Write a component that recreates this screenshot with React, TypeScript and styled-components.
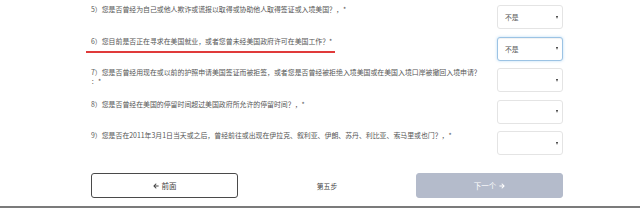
import React from 'react';
import styled, { createGlobalStyle } from 'styled-components';
import { FaArrowLeft, FaArrowRight } from 'react-icons/fa';

const GlobalStyle = createGlobalStyle`
  html, body {
    margin: 0;
    padding: 0;
    background: #ffffff;
  }
  body {
    font-family: "Noto Sans CJK SC", "Noto Sans", sans-serif;
  }
`;

const Page = styled.div`
  width: 640px;
  height: 208px;
  box-sizing: border-box;
  padding: 5px 0 0 91px;
  border-bottom: 2px solid #7b7b7b;
  overflow: hidden;
`;

const Form = styled.div`
  width: 472px;
  display: flex;
  flex-direction: column;
  gap: 7.5px;
`;

const Row = styled.div`
  display: flex;
  justify-content: space-between;
  align-items: flex-start;
  min-height: 24px;
`;

const Label = styled.div`
  width: 400px;
  font-size: 6.9px;
  line-height: 9px;
  color: #555555;
  white-space: nowrap;
`;

const Marked = styled.span`
  position: relative;
  &::after {
    content: '';
    position: absolute;
    left: -5px;
    right: -3px;
    bottom: -7px;
    height: 2px;
    background: #e03a3a;
  }
`;

const Select = styled.div<{ $focused?: boolean }>`
  width: 66px;
  height: 24px;
  box-sizing: border-box;
  display: flex;
  align-items: center;
  justify-content: space-between;
  padding: 0 4px 0 7px;
  border: 1px solid ${p => (p.$focused ? '#9cc3e4' : '#e4e4e4')};
  border-radius: 3px;
  background: #ffffff;
  box-shadow: ${p => (p.$focused ? 'inset 0 1px 1px rgba(0,0,0,0.06), 0 0 3px rgba(102,175,233,0.45)' : 'none')};
  font-size: 6.8px;
  color: #555555;
`;

const Caret = styled.span`
  width: 0;
  height: 0;
  border-left: 1.5px solid transparent;
  border-right: 1.5px solid transparent;
  border-top: 3px solid #333333;
`;

const Footer = styled.div`
  width: 472px;
  margin-top: 18px;
  display: grid;
  grid-template-columns: 147px 1fr 147px;
  align-items: center;
`;

const NavButton = styled.div<{ $primary?: boolean }>`
  height: 25px;
  box-sizing: border-box;
  display: flex;
  align-items: center;
  justify-content: center;
  gap: 3px;
  border-radius: 3px;
  border: 1px solid ${p => (p.$primary ? '#b4bbcb' : '#4a4a4a')};
  background: ${p => (p.$primary ? '#b4bbcb' : '#ffffff')};
  color: ${p => (p.$primary ? '#ffffff' : '#444444')};
  font-size: 7.5px;
`;

const Step = styled.div`
  text-align: center;
  font-size: 6.8px;
  color: #444444;
`;

const questions = [
  { text: '5）您是否曾经为自己或他人欺诈或谎报以取得或协助他人取得签证或入境美国？，*', value: '不是' },
  { text: '6）您目前是否正在寻求在美国就业，或者您曾未经美国政府许可在美国工作？*', value: '不是', focused: true, marked: true },
  { text: '7）您是否曾经用现在或以前的护照申请美国签证而被拒签，或者您是否曾经被拒绝入境美国或在美国入境口岸被撤回入境申请？', tail: '：*', value: '' },
  { text: '8）您是否曾经在美国的停留时间超过美国政府所允许的停留时间？，*', value: '' },
  { text: '9）您是否在2011年3月1日当天或之后，曾经前往或出现在伊拉克、叙利亚、伊朗、苏丹、利比亚、索马里或也门？，*', value: '' },
];

export default function App() {
  return (
    <Page>
      <GlobalStyle />
      <Form>
        {questions.map((q, i) => (
          <Row key={i}>
            <Label>
              {q.marked ? <Marked>{q.text}</Marked> : q.text}
              {q.tail && (
                <>
                  <br />
                  {q.tail}
                </>
              )}
            </Label>
            <Select $focused={q.focused}>
              <span>{q.value}</span>
              <Caret />
            </Select>
          </Row>
        ))}
      </Form>
      <Footer>
        <NavButton>
          <FaArrowLeft size={6} />
          前面
        </NavButton>
        <Step>第五步</Step>
        <NavButton $primary>
          下一个
          <FaArrowRight size={6} />
        </NavButton>
      </Footer>
    </Page>
  );
}
